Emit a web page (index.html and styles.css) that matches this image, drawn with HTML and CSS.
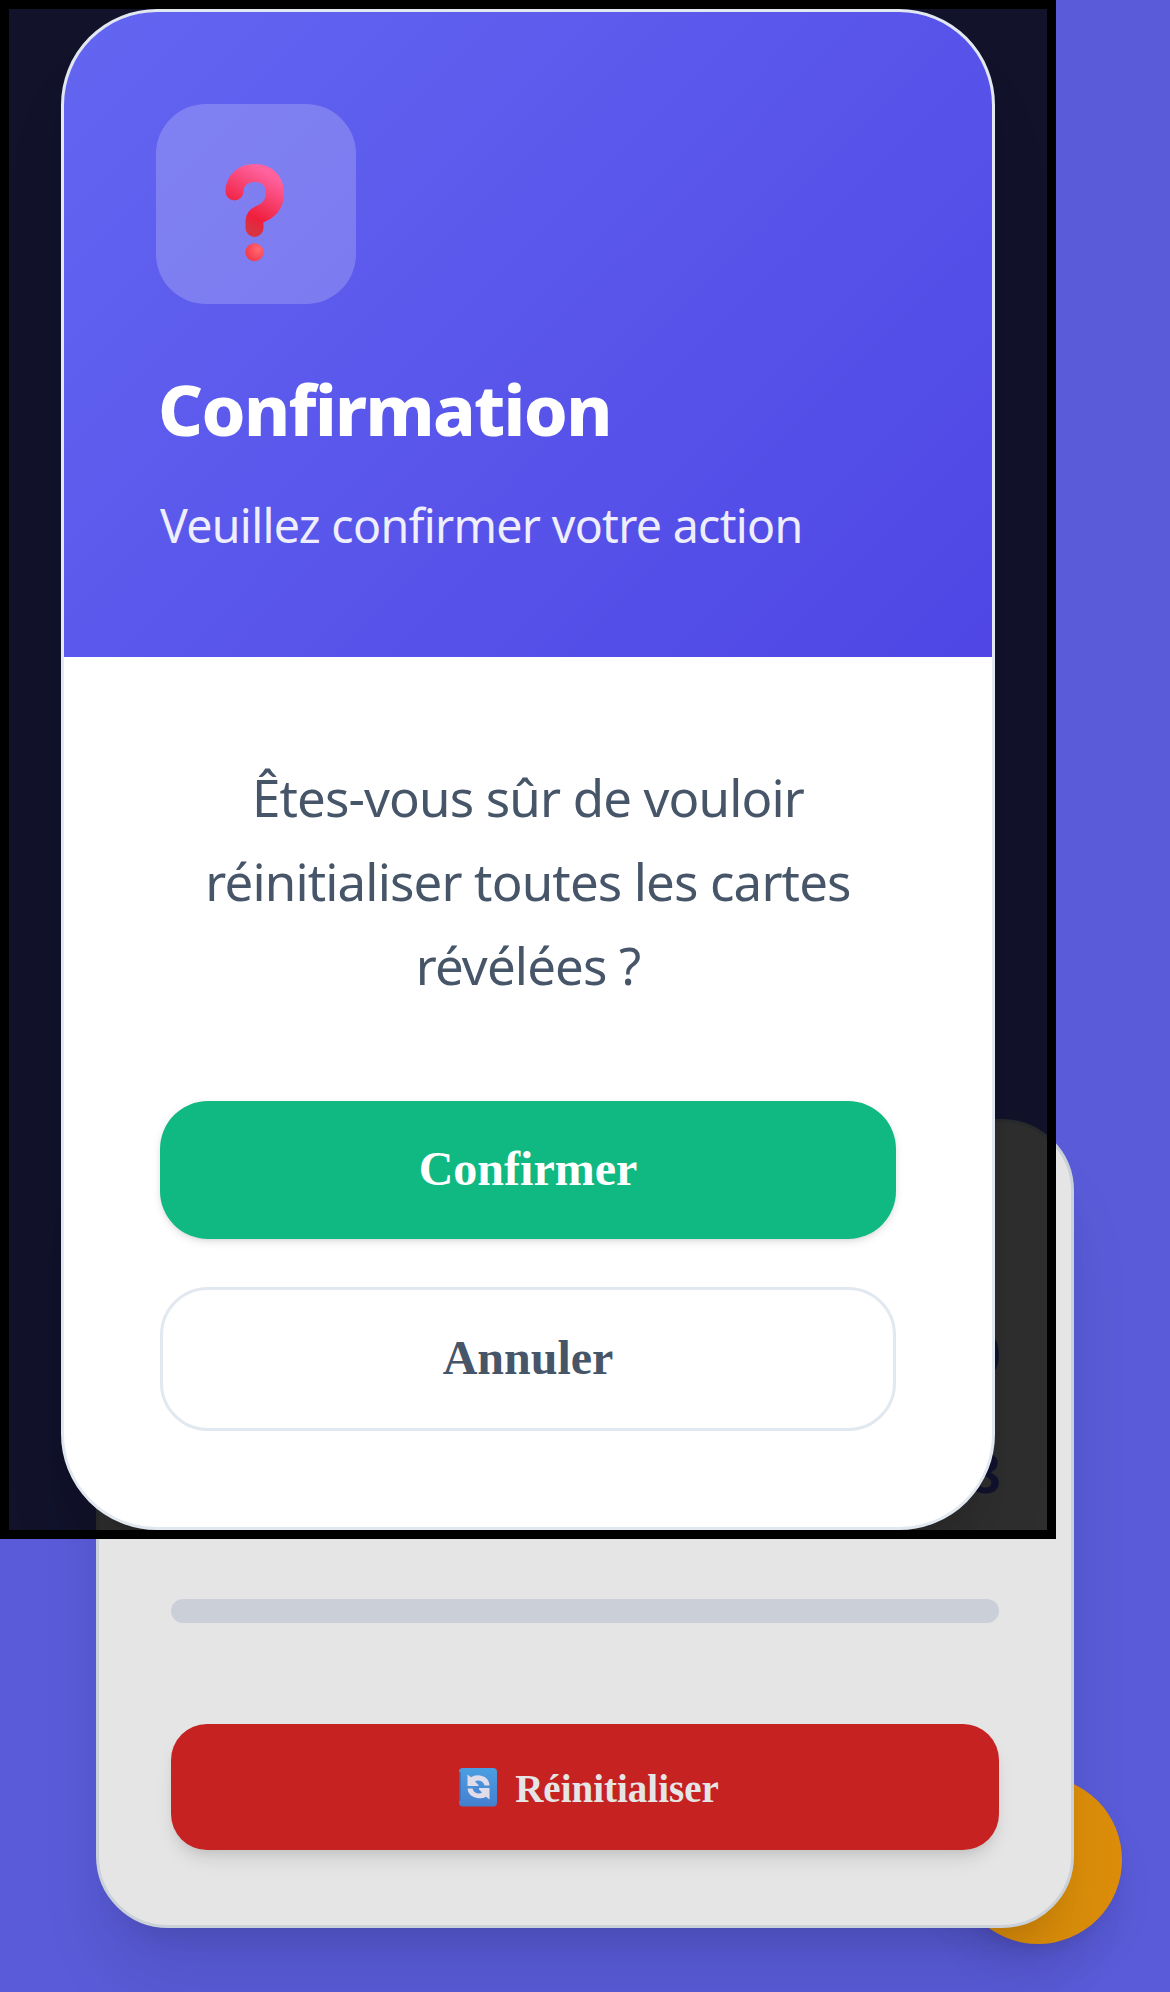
FILE: index.html
```html
<!DOCTYPE html>
<html lang="fr">
<head>
<meta charset="utf-8">
<title>Confirmation</title>
<link rel="stylesheet" href="styles.css">
</head>
<body>
<main class="page">
  <section class="panel">
    <div class="stats">
      <div class="stat">0</div>
      <div class="stat">8</div>
    </div>
    <div class="progress"></div>
    <button class="reset">
      <svg class="reset-icon" viewBox="0 0 40 40">
        <defs><linearGradient id="tile" x1="0" y1="0" x2="0" y2="1"><stop offset="0" stop-color="#4a9ee0"/><stop offset=".25" stop-color="#4b97dd"/><stop offset="1" stop-color="#447fcf"/></linearGradient></defs>
        <rect x="1" y="1" width="38" height="38.500" rx="4" fill="url(#tile)"/>
        <path d="M1.800 5v29" stroke="#3f68b5" stroke-width="1.600"/>
        <path d="M9.500 7.500L13 10.300Q17 7.500 22 8.500Q31 10 31.500 18.500H26.500Q25 13.500 20 13.500Q18.500 13.500 17 14.500L20.500 18V19H9.500Z" fill="#e0dcea"/>
        <path d="M31.500 32.500L28 29.700Q24 32 19 31Q10 29 9.500 21.500H14.500Q16 26.500 21 26.500Q22.500 26.500 24 25.500L21 22.500V21H31.500Z" fill="#e0dcea"/>
      </svg>
      <span class="reset-label">Réinitialiser</span>
    </button>
  </section>
  <div class="bubble"></div>
</main>
<div class="dialog">
  <section class="modal">
    <header class="modal-header">
      <div class="modal-icon">
        <svg class="question" viewBox="0 0 60 100">
          <defs>
            <linearGradient id="hook" x1=".8" y1="0" x2=".4" y2="1"><stop offset="0" stop-color="#ff629d"/><stop offset=".45" stop-color="#f63c68"/><stop offset=".8" stop-color="#f01f3c"/><stop offset="1" stop-color="#d93240"/></linearGradient>
            <radialGradient id="dot" cx=".7" cy=".35" r=".7"><stop offset="0" stop-color="#ff6a70"/><stop offset="1" stop-color="#f43a4d"/></radialGradient>
          </defs>
          <path d="M9.500 28.500C9.500 17.500 18 10 29.500 10C42 10 50 18 50 30C50 41 44.500 46.500 37.500 50C31.500 52 29.500 54 29.500 58V65" fill="none" stroke="url(#hook)" stroke-width="18" stroke-linecap="round"/>
          <circle cx="29.500" cy="89.200" r="9" fill="url(#dot)"/>
        </svg>
      </div>
      <h1 class="modal-title">Confirmation</h1>
      <p class="modal-subtitle">Veuillez confirmer votre action</p>
    </header>
    <div class="modal-body">
      <p class="message">Êtes-vous sûr de vouloir<br>réinitialiser toutes les cartes<br>révélées ?</p>
      <button class="action confirm">Confirmer</button>
      <button class="action cancel">Annuler</button>
    </div>
  </section>
</div>
</body>
</html>
```
FILE: styles.css
```css
* { box-sizing: border-box; }
body {
  margin: 0;
  width: 1170px;
  height: 1992px;
  overflow: hidden;
  background: #595bd8;
  font-family: "Noto Sans", sans-serif;
}
button { font-family: "Liberation Serif", serif; font-weight: 700; padding: 0; border: 0; }
.page { position: relative; height: 1992px; padding: 1119px 96px 64px; }
.panel {
  position: relative;
  z-index: 1;
  height: 809px;
  padding: 0 72px;
  display: flex;
  flex-direction: column;
  background: #e5e5e5;
  border: 3px solid #cbd1d8;
  border-radius: 72px;
  box-shadow: 0 60px 75px -15px rgba(0, 0, 0, .1), 0 24px 30px -18px rgba(0, 0, 0, .1);
}
.stats { height: 477px; margin-right: -2px; padding-top: 199px; color: #555bd9; text-align: right; }
.stat { height: 119px; line-height: 64px; font-size: 54px; font-weight: 700; }
.progress { height: 24px; border-radius: 12px; background: #cbd0d8; }
.reset {
  height: 126px;
  margin-top: 101px;
  padding-left: 7px;
  display: flex;
  align-items: center;
  justify-content: center;
  gap: 17px;
  border-radius: 36px;
  background: #c62222;
  color: #e5e5e5;
  box-shadow: 0 12px 18px -3px rgba(0, 0, 0, .1), 0 6px 12px -6px rgba(0, 0, 0, .1);
}
.reset-icon { width: 40px; height: 40px; }
.reset-label { padding-top: 4px; font-size: 39px; line-height: 46px; }
.bubble {
  position: absolute;
  left: 954px;
  top: 1776px;
  width: 168px;
  height: 168px;
  border-radius: 50%;
  background: #dc8e0a;
  box-shadow: 0 30px 45px -9px rgba(0, 0, 0, .1), 0 12px 18px -12px rgba(0, 0, 0, .1);
}
.dialog {
  position: absolute;
  z-index: 2;
  left: 0;
  top: 0;
  width: 1056px;
  height: 1539px;
  padding: 0 52px;
  border: 9px solid #000;
  background: rgba(0, 0, 0, .8);
  overflow: hidden;
}
.modal {
  height: 1521px;
  border: 3px solid #e2e8f0;
  border-radius: 96px;
  background: #fff;
  overflow: hidden;
  box-shadow: 0 60px 75px -15px rgba(0, 0, 0, .1), 0 24px 30px -18px rgba(0, 0, 0, .1);
}
.modal-header {
  height: 645px;
  padding: 92px 96px 0;
  background: linear-gradient(135deg, #6366f1, #4f46e5);
  color: #fff;
}
.modal-icon {
  width: 200px;
  height: 200px;
  margin-left: -4px;
  display: flex;
  justify-content: center;
  padding-top: 59px;
  border-radius: 50px;
  background: rgba(255, 255, 255, .2);
}
.question { width: 60px; height: 100px; margin-right: 2px; }
.modal-title { margin: 57px 0 0 -2px; height: 96px; line-height: 96px; font-size: 70px; font-weight: 800; letter-spacing: -1.6px; white-space: nowrap; }
.modal-subtitle { margin: 36px 0 0; height: 64px; line-height: 64px; font-size: 46.500px; letter-spacing: -.7px; white-space: nowrap; opacity: .9; }
.modal-body { padding: 98px 96px 0; }
.message { margin: 0; height: 346px; line-height: 84px; font-size: 51px; letter-spacing: -.85px; text-align: center; color: #475569; white-space: nowrap; }
.action { display: block; width: 736px; padding-bottom: 3px; border-radius: 48px; font-size: 48px; }
.confirm { height: 138px; background: #10b981; color: #fff; box-shadow: 0 3px 9px rgba(0, 0, 0, .1), 0 3px 6px -3px rgba(0, 0, 0, .1); }
.cancel { height: 144px; margin-top: 48px; border: 3px solid #e2e8f0; background: #fff; color: #475569; }
```
